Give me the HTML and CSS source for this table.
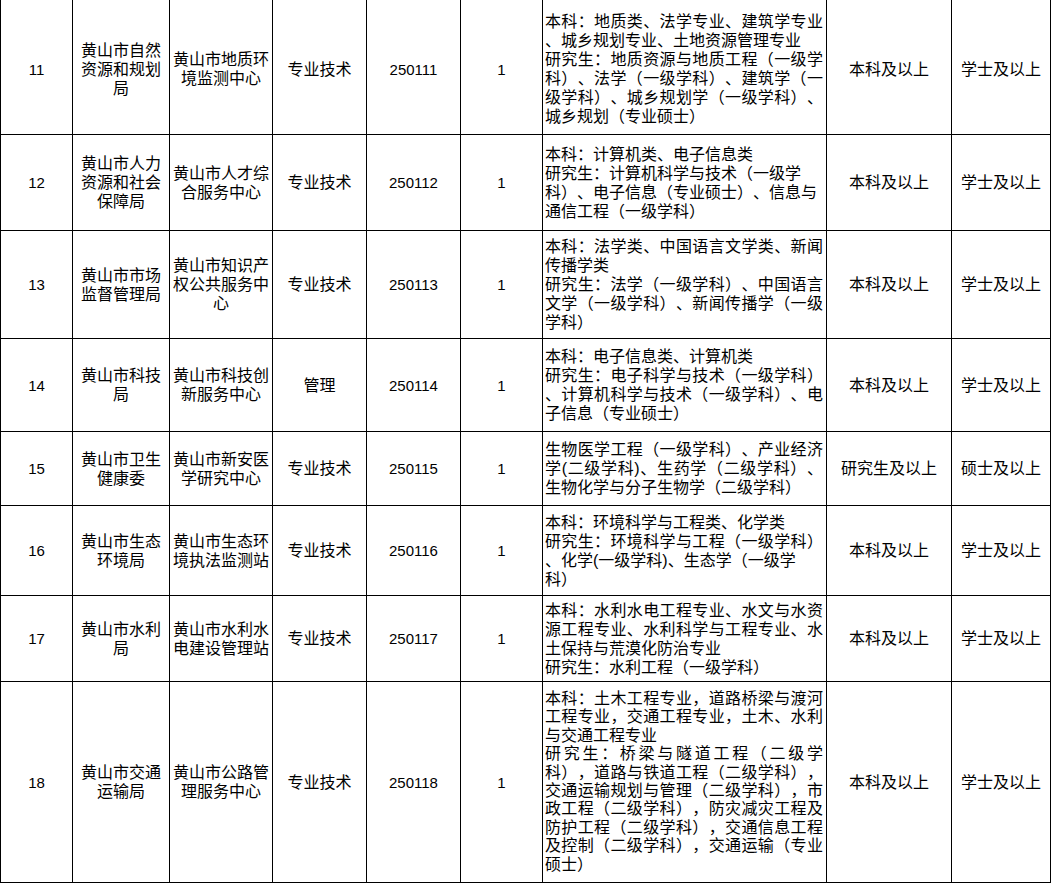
FILE: index.html
```html
<!DOCTYPE html>
<html lang="zh-CN">
<head>
<meta charset="utf-8">
<title>岗位表</title>
<link rel="stylesheet" href="styles.css">
</head>
<body>
<div class="sheet">
  <div class="row first">
    <div class="cell num">11</div>
    <div class="cell">黄山市自然资源和规划局</div>
    <div class="cell">黄山市地质环境监测中心</div>
    <div class="cell">专业技术</div>
    <div class="cell num">250111</div>
    <div class="cell num">1</div>
    <div class="cell req">
      <span class="ln j">本科：地质类、法学专业、建筑学专业</span>
      <span class="ln">、城乡规划专业、土地资源管理专业</span>
      <span class="ln j">研究生：地质资源与地质工程（一级学</span>
      <span class="ln j">科）、法学（一级学科）、建筑学（一</span>
      <span class="ln j">级学科）、城乡规划学（一级学科）、</span>
      <span class="ln">城乡规划（专业硕士）</span>
    </div>
    <div class="cell">本科及以上</div>
    <div class="cell">学士及以上</div>
  </div>
  <div class="row">
    <div class="cell num">12</div>
    <div class="cell">黄山市人力资源和社会保障局</div>
    <div class="cell">黄山市人才综合服务中心</div>
    <div class="cell">专业技术</div>
    <div class="cell num">250112</div>
    <div class="cell num">1</div>
    <div class="cell req">
      <span class="ln">本科：计算机类、电子信息类</span>
      <span class="ln">研究生：计算机科学与技术（一级学</span>
      <span class="ln">科）、电子信息（专业硕士）、信息与</span>
      <span class="ln">通信工程（一级学科）</span>
    </div>
    <div class="cell">本科及以上</div>
    <div class="cell">学士及以上</div>
  </div>
  <div class="row">
    <div class="cell num">13</div>
    <div class="cell">黄山市市场监督管理局</div>
    <div class="cell">黄山市知识产权公共服务中心</div>
    <div class="cell">专业技术</div>
    <div class="cell num">250113</div>
    <div class="cell num">1</div>
    <div class="cell req">
      <span class="ln j">本科：法学类、中国语言文学类、新闻</span>
      <span class="ln">传播学类</span>
      <span class="ln j">研究生：法学（一级学科）、中国语言</span>
      <span class="ln j">文学（一级学科）、新闻传播学（一级</span>
      <span class="ln">学科）</span>
    </div>
    <div class="cell">本科及以上</div>
    <div class="cell">学士及以上</div>
  </div>
  <div class="row">
    <div class="cell num">14</div>
    <div class="cell">黄山市科技局</div>
    <div class="cell">黄山市科技创新服务中心</div>
    <div class="cell">管理</div>
    <div class="cell num">250114</div>
    <div class="cell num">1</div>
    <div class="cell req">
      <span class="ln">本科：电子信息类、计算机类</span>
      <span class="ln j">研究生：电子科学与技术（一级学科）</span>
      <span class="ln j">、计算机科学与技术（一级学科）、电</span>
      <span class="ln">子信息（专业硕士）</span>
    </div>
    <div class="cell">本科及以上</div>
    <div class="cell">学士及以上</div>
  </div>
  <div class="row">
    <div class="cell num">15</div>
    <div class="cell">黄山市卫生健康委</div>
    <div class="cell">黄山市新安医学研究中心</div>
    <div class="cell">专业技术</div>
    <div class="cell num">250115</div>
    <div class="cell num">1</div>
    <div class="cell req">
      <span class="ln j">生物医学工程（一级学科）、产业经济</span>
      <span class="ln j">学(二级学科)、生药学（二级学科）、</span>
      <span class="ln">生物化学与分子生物学（二级学科）</span>
    </div>
    <div class="cell">研究生及以上</div>
    <div class="cell">硕士及以上</div>
  </div>
  <div class="row">
    <div class="cell num">16</div>
    <div class="cell">黄山市生态环境局</div>
    <div class="cell">黄山市生态环境执法监测站</div>
    <div class="cell">专业技术</div>
    <div class="cell num">250116</div>
    <div class="cell num">1</div>
    <div class="cell req">
      <span class="ln">本科：环境科学与工程类、化学类</span>
      <span class="ln j">研究生：环境科学与工程（一级学科）</span>
      <span class="ln">、化学(一级学科)、生态学（一级学</span>
      <span class="ln">科）</span>
    </div>
    <div class="cell">本科及以上</div>
    <div class="cell">学士及以上</div>
  </div>
  <div class="row">
    <div class="cell num">17</div>
    <div class="cell">黄山市水利局</div>
    <div class="cell">黄山市水利水电建设管理站</div>
    <div class="cell">专业技术</div>
    <div class="cell num">250117</div>
    <div class="cell num">1</div>
    <div class="cell req">
      <span class="ln j">本科：水利水电工程专业、水文与水资</span>
      <span class="ln j">源工程专业、水利科学与工程专业、水</span>
      <span class="ln">土保持与荒漠化防治专业</span>
      <span class="ln">研究生：水利工程（一级学科）</span>
    </div>
    <div class="cell">本科及以上</div>
    <div class="cell">学士及以上</div>
  </div>
  <div class="row last">
    <div class="cell num">18</div>
    <div class="cell">黄山市交通运输局</div>
    <div class="cell">黄山市公路管理服务中心</div>
    <div class="cell">专业技术</div>
    <div class="cell num">250118</div>
    <div class="cell num">1</div>
    <div class="cell req">
      <span class="ln j">本科：土木工程专业，道路桥梁与渡河</span>
      <span class="ln j">工程专业，交通工程专业，土木、水利</span>
      <span class="ln">与交通工程专业</span>
      <span class="ln j">研究生：桥梁与隧道工程（二级学</span>
      <span class="ln j">科），道路与铁道工程（二级学科），</span>
      <span class="ln j">交通运输规划与管理（二级学科），市</span>
      <span class="ln j">政工程（二级学科），防灾减灾工程及</span>
      <span class="ln j">防护工程（二级学科），交通信息工程</span>
      <span class="ln j">及控制（二级学科），交通运输（专业</span>
      <span class="ln">硕士）</span>
    </div>
    <div class="cell">本科及以上</div>
    <div class="cell">学士及以上</div>
  </div>
</div>
</body>
</html>
```

FILE: styles.css
```css
html, body {
  margin: 0;
  padding: 0;
  background: #ffffff;
}

.sheet {
  display: grid;
  grid-template-columns: 71px 96px 102px 93px 93px 81px 283px 124px 98px;
  grid-template-rows: 134px 95px 107px 92px 73px 89px 85px 200px;
  gap: 1px;
  width: max-content;
  padding: 0 1px 1px 1px;
  background: #000000;
  font-family: "Liberation Sans", "Noto Sans CJK SC", sans-serif;
  font-size: 16px;
  line-height: 19px;
  color: #000000;
  text-spacing-trim: space-all;
}

.row {
  display: contents;
}

.cell {
  background: #ffffff;
  display: flex;
  align-items: center;
  justify-content: center;
  text-align: center;
  padding: 0 3px;
}

.first .cell {
  padding-top: 4px;
}

.num {
  font-size: 15px;
}

.req {
  flex-direction: column;
  align-items: stretch;
  justify-content: center;
  text-align: left;
  padding: 0 3px 0 2px;
}

.first .req {
  padding-top: 4px;
}

.last .req {
  line-height: 18.4px;
}

.ln {
  display: block;
  white-space: nowrap;
}

.j {
  text-align: justify;
  text-align-last: justify;
  text-justify: inter-character;
}
```
